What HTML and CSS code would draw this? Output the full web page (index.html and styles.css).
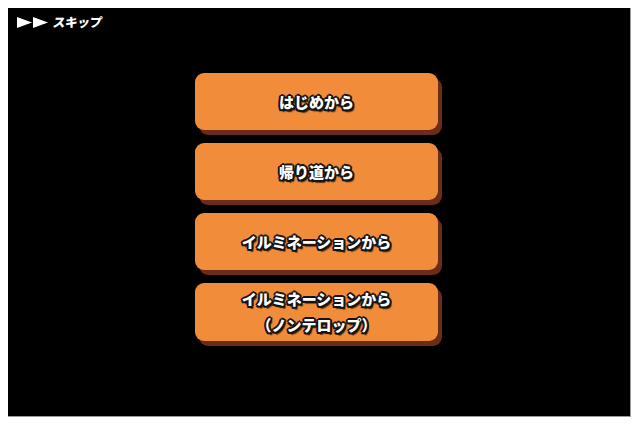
FILE: index.html
```html
<!DOCTYPE html>
<html lang="ja">
<head>
<meta charset="utf-8">
<title>スキップ</title>
<link rel="stylesheet" href="styles.css">
</head>
<body>
<div class="stage">
  <div class="skip">
    <svg class="skip-icon" width="32" height="11" viewBox="0 0 32 11">
      <polygon points="0,0 15,5.5 0,11" fill="#fff"/>
      <polygon points="16,0 31,5.5 16,11" fill="#fff"/>
    </svg>
    <span class="skip-label">スキップ</span>
  </div>
  <div class="menu">
    <div class="btn"><span class="label">はじめから</span></div>
    <div class="btn"><span class="label">帰り道から</span></div>
    <div class="btn"><span class="label">イルミネーションから</span></div>
    <div class="btn"><span class="label">イルミネーションから<br>（ノンテロップ）</span></div>
  </div>
</div>
</body>
</html>
```

FILE: styles.css
```css
html, body {
  margin: 0;
  background: #fff;
}

body {
  padding: 8px;
  font-family: "Noto Sans CJK JP", "Noto Sans", sans-serif;
}

.stage {
  width: 623px;
  height: 409px;
  background: #000;
  border-right: 1px solid #9a9a9a;
  border-bottom: 1px solid #9a9a9a;
  box-sizing: border-box;
  display: flex;
  flex-direction: column;
}

.skip {
  display: flex;
  align-items: center;
  gap: 4px;
  padding: 6px 0 0 9px;
  height: 16px;
}

.skip-icon {
  display: block;
}

.skip-label {
  color: #fff;
  font-weight: 900;
  font-size: 12.5px;
  line-height: 16px;
  letter-spacing: -0.3px;
  transform: skewX(-8deg);
}

.menu {
  display: flex;
  flex-direction: column;
  gap: 13px;
  margin: 43px 0 0 187px;
}

.btn {
  width: 243px;
  height: 57px;
  background: #f18c3a;
  border-radius: 9px;
  box-shadow: 4px 5px 0 #6b2c19;
  display: flex;
  align-items: center;
  justify-content: center;
  text-align: center;
}

.btn:last-child {
  height: 58px;
}

.label {
  color: #fff;
  font-weight: 900;
  font-size: 15px;
  line-height: 26px;
  text-shadow:
    -2px 0 0 #141414, 2px 0 0 #141414, 0 -2px 0 #141414, 0 2px 0 #141414,
    -1.5px -1.5px 0 #141414, 1.5px -1.5px 0 #141414, -1.5px 1.5px 0 #141414, 1.5px 1.5px 0 #141414,
    2px 2.5px 1px rgba(0, 0, 0, 0.6);
}
```
